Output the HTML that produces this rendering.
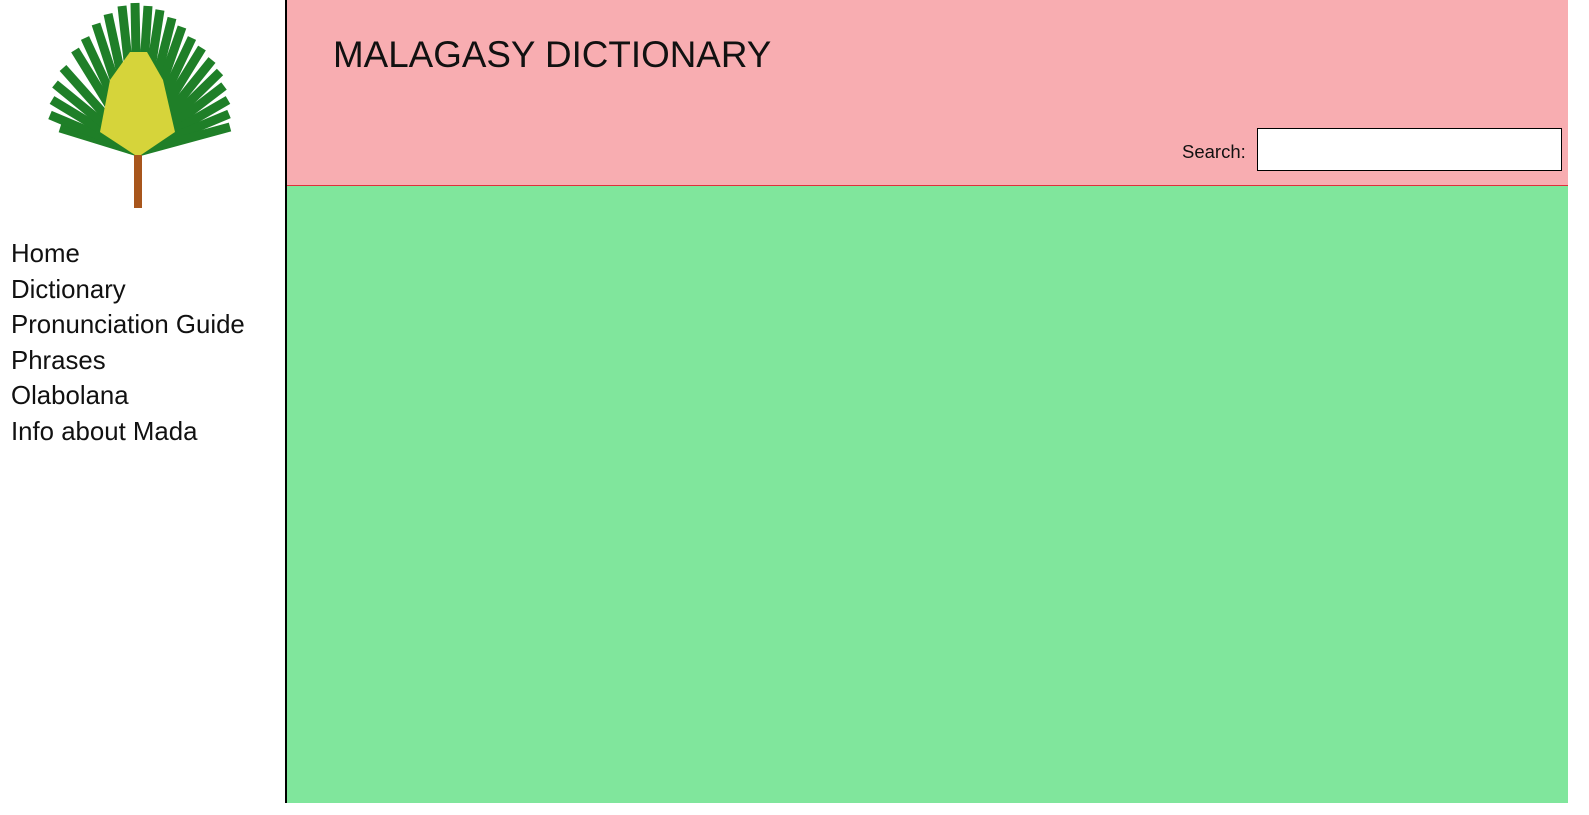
<!DOCTYPE html>
<html><head><meta charset="utf-8"><style>
body{margin:0;width:1589px;height:815px;background:#fff;position:relative;overflow:hidden;font-family:"Liberation Sans",Arial,sans-serif}
#hdr{position:absolute;left:287px;top:0;width:1281px;height:185px;background:#f8adb1;border-bottom:1px solid #e0303a}
#main{position:absolute;left:287px;top:186px;width:1281px;height:617px;background:#80e69c}
#bar{position:absolute;left:285px;top:0;width:2px;height:803px;background:#000}
h1{position:absolute;left:333px;top:34px;margin:0;font-weight:normal;font-size:36.8px;color:#111}
#srch{position:absolute;left:1182px;top:141px;font-size:18.5px;color:#111}
#box{position:absolute;left:1257px;top:128px;width:303px;height:41px;background:#fff;border:1.5px solid #000}
#nav{position:absolute;left:11px;top:237px;font-size:25.8px;line-height:35.6px;color:#111}
</style></head><body>
<svg style="position:absolute;left:30px;top:0" width="240" height="215" viewBox="0 0 240 215">
<g stroke="#1f7f28" stroke-width="9" stroke-linecap="butt">
<line x1="108" y1="152" x2="30" y2="128"/><line x1="108" y1="152" x2="20" y2="115"/>
<line x1="108" y1="152" x2="22" y2="100"/><line x1="108" y1="152" x2="25" y2="84"/>
<line x1="108" y1="152" x2="33" y2="68"/><line x1="108" y1="152" x2="45" y2="50"/>
<line x1="108" y1="152" x2="55" y2="38"/><line x1="108" y1="152" x2="66" y2="24"/>
<line x1="108" y1="152" x2="78" y2="14"/><line x1="108" y1="152" x2="92" y2="6"/>
<line x1="108" y1="152" x2="105" y2="3"/><line x1="108" y1="152" x2="118" y2="6"/>
<line x1="108" y1="152" x2="130" y2="10"/><line x1="108" y1="152" x2="142" y2="18"/>
<line x1="108" y1="152" x2="152" y2="27"/><line x1="108" y1="152" x2="162" y2="38"/>
<line x1="108" y1="152" x2="172" y2="48"/><line x1="108" y1="152" x2="182" y2="60"/>
<line x1="108" y1="152" x2="190" y2="72"/><line x1="108" y1="152" x2="194" y2="86"/>
<line x1="108" y1="152" x2="198" y2="100"/><line x1="108" y1="152" x2="199" y2="114"/>
<line x1="108" y1="152" x2="200" y2="127"/>
</g>
<path d="M108 157 L70 132 L80 80 L100 52 L117 52 L133 80 L145 132 Z" fill="#d6d43a"/>
<rect x="104" y="155" width="8" height="53" fill="#a8561c"/>
</svg>
<div id="hdr"></div><div id="main"></div><div id="bar"></div>
<h1>MALAGASY DICTIONARY</h1>
<div id="srch">Search:</div><div id="box"></div>
<div id="nav">Home<br>Dictionary<br>Pronunciation Guide<br>Phrases<br>Olabolana<br>Info about Mada</div>
</body></html>
